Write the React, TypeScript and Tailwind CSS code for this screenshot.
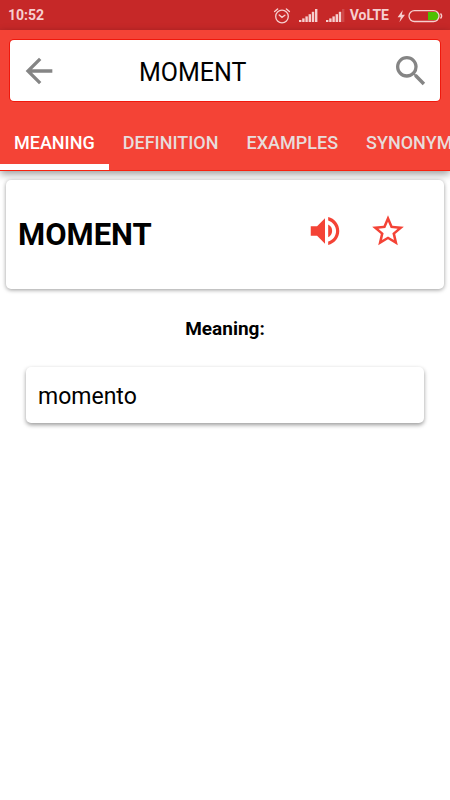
import { useState } from 'react'
import { MdArrowBack, MdSearch, MdStarBorder, MdVolumeUp } from 'react-icons/md'

const tabs = ['MEANING', 'DEFINITION', 'EXAMPLES', 'SYNONYMS']

function AlarmIcon() {
  return (
    <svg width="18" height="18" viewBox="0 0 18 18" fill="none" stroke="currentColor" strokeLinecap="round" aria-hidden="true">
      <circle cx="9" cy="9.5" r="6.3" strokeWidth="1.3" />
      <path d="M1.6 4.6 4.6 1.9M16.4 4.6 13.4 1.9" strokeWidth="1.4" />
      <path d="M6.2 8 9 10.4 11.9 8.2" strokeWidth="1.4" />
    </svg>
  )
}

function SignalIcon({ weak = false }: { weak?: boolean }) {
  return (
    <svg width="19" height="14" viewBox="0 0 19 14" fill="currentColor" aria-hidden="true">
      <rect x="0" y="12" width="2.4" height="2" />
      <rect x="3.2" y="10.4" width="2.4" height="3.6" />
      <rect x="6.4" y="8.4" width="2.4" height="5.6" />
      <rect x="9.6" y="6.2" width="2.4" height="7.8" />
      <rect x="12.8" y="3.8" width="2.4" height="10.2" />
      <rect x="16" y="1" width="2.4" height="13" opacity={weak ? 0.2 : 1} />
    </svg>
  )
}

function BatteryIcon() {
  return (
    <svg width="46" height="14" viewBox="0 0 46 14" fill="none" aria-hidden="true">
      <path d="M5.8 1 .6 8.2h3.2L2.4 13.2 8 5.8H4.8z" fill="currentColor" />
      <path d="M31 3h7.5a4 4 0 0 1 0 8H31z" fill="#4fc000" />
      <rect x="12" y="1.7" width="30" height="10.8" rx="5.4" stroke="currentColor" strokeWidth="1.3" />
      <path d="M43.5 4.5c1.2 1.4 1.2 3.7 0 5" stroke="currentColor" strokeWidth="1.4" />
    </svg>
  )
}

function StatusBar() {
  return (
    <div className="flex h-[30px] items-center bg-[#c62828] pt-px pl-2 pr-[7px] text-[14px] font-bold text-[#f6cfcf]">
      <span>10:52</span>
      <div className="ml-auto flex items-center">
        <AlarmIcon />
        <span className="ml-2 mb-px"><SignalIcon /></span>
        <span className="ml-2 mb-px"><SignalIcon weak /></span>
        <span className="ml-[5px] mr-2">VoLTE</span>
        <BatteryIcon />
      </div>
    </div>
  )
}

export default function App() {
  const [query, setQuery] = useState('MOMENT')
  const [active, setActive] = useState('MEANING')

  return (
    <div className="min-h-screen overflow-hidden bg-white font-[Roboto,sans-serif] text-black">
      <StatusBar />

      <header className="bg-[#f44336] pt-[10px] shadow-[0_3px_8px_rgba(0,0,0,0.4)]">
        <form
          className="mx-[10px] flex h-[61px] items-center rounded-[4px] bg-white px-[9px] shadow-[0_0_0_1px_#f0180c]"
          onSubmit={(e) => e.preventDefault()}
        >
          <button type="button" aria-label="Back" className="text-[#858585]">
            <MdArrowBack size={40} />
          </button>
          <input
            aria-label="Search word"
            value={query}
            onChange={(e) => setQuery(e.target.value)}
            className="ml-20 min-w-0 flex-1 bg-transparent pt-1 text-[25px] outline-none"
          />
          <button type="submit" aria-label="Search" className="text-[#858585]">
            <MdSearch size={40} />
          </button>
        </form>

        <nav className="mt-5 flex overflow-x-auto border-b border-[#f8210f] [scrollbar-width:none]">
          {tabs.map((tab) => (
            <button
              key={tab}
              type="button"
              onClick={() => setActive(tab)}
              className={`h-[49px] shrink-0 border-b-[6px] px-[14px] text-[18px] font-medium ${
                active === tab ? 'border-white text-white' : 'border-transparent text-[#e8dcdb]'
              }`}
            >
              {tab}
            </button>
          ))}
        </nav>
      </header>

      <main>
        <section className="mx-[6px] mt-[9px] flex h-[109px] items-center rounded-[5px] bg-white px-3 shadow-[0_1px_4px_rgba(0,0,0,0.4)]">
          <h1 className="pt-[2px] text-[31px] font-bold">MOMENT</h1>
          <div className="mb-2 ml-auto mr-[25px] flex items-center gap-[25px] text-[#f44336]">
            <button type="button" aria-label="Listen">
              <MdVolumeUp size={38} />
            </button>
            <button type="button" aria-label="Add to favourites">
              <MdStarBorder size={38} />
            </button>
          </div>
        </section>

        <h2 className="mt-[28px] text-center text-[19px] leading-6 font-bold">Meaning:</h2>
        <p className="mx-[26px] mt-[26px] rounded-[5px] bg-white px-3 pt-[14px] pb-[10px] text-[23px] leading-8 shadow-[0_2px_4px_rgba(0,0,0,0.4)]">
          momento
        </p>
      </main>
    </div>
  )
}
